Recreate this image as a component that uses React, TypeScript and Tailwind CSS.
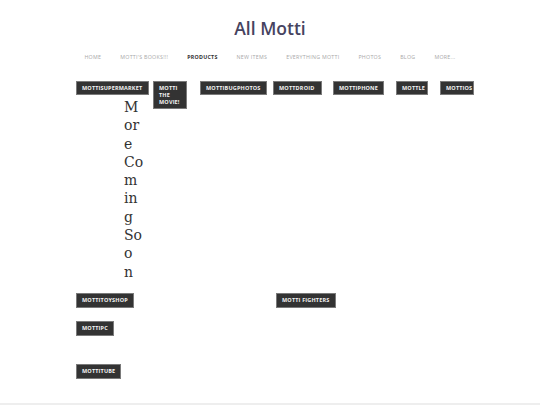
import React from "react";

const Btn = ({ children, w, h = 15, className = "" }: { children: React.ReactNode; w: number; h?: number; className?: string }) => (
  <div
    className={`shrink-0 overflow-hidden whitespace-nowrap border border-[#7a7a7a] bg-[#333333] pl-[5px] pt-[3px] text-[5.5px] font-bold leading-[7px] tracking-[0.03em] text-[#f4f4f4] ${className}`}
    style={{ width: w, height: h, fontFamily: '"Open Sans", sans-serif' }}
  >
    {children}
  </div>
);

export default function App() {
  const nav = ["HOME", "MOTTI'S BOOKS!!!", "PRODUCTS", "NEW ITEMS", "EVERYTHING MOTTI", "PHOTOS", "BLOG", "MORE..."];
  const lines = ["M", "or", "e", "Co", "m", "in", "g", "So", "o", "n"];
  return (
    <div className="relative h-[405px] w-[540px] overflow-hidden bg-white" style={{ fontFamily: '"Open Sans", sans-serif' }}>
      <div className="pt-[19px] text-center text-[17.5px] font-semibold leading-[18px] text-[#46435f]">All Motti</div>
      <nav className="mt-[16px] flex justify-center gap-[19px] text-[5.3px] leading-[8px] tracking-[0.05em] text-[#a8a8a8]">
        {nav.map((n) => (
          <span key={n} className={n === "PRODUCTS" ? "font-bold text-[#333333]" : ""}>
            {n}
          </span>
        ))}
      </nav>
      <div className="pl-[76px] pt-[20px]">
        <div className="flex h-[14px] items-start">
          <Btn w={73} h={14}>MOTTISUPERMARKET</Btn>
          <Btn w={34} h={28} className="ml-[4px] whitespace-normal">
            MOTTI
            <br />
            THE
            <br />
            MOVIE!
          </Btn>
          <Btn w={67} h={14} className="ml-[13px]">MOTTIBUGPHOTOS</Btn>
          <Btn w={49} h={14} className="ml-[6px]">MOTTDROID</Btn>
          <Btn w={51} h={14} className="ml-[11px]">MOTTIPHONE</Btn>
          <Btn w={32} h={14} className="ml-[12px]">MOTTLE</Btn>
          <Btn w={34} h={14} className="ml-[12px]">MOTTIOS</Btn>
        </div>
        <div
          className="ml-[48px] mt-[3px] text-[14px] leading-[18.3px] text-[#333333]"
          style={{ fontFamily: '"DejaVu Serif", serif' }}
        >
          {lines.map((l, i) => (
            <div key={i}>{l}</div>
          ))}
        </div>
        <div className="mt-[12px] flex items-start">
          <Btn w={58}>MOTTITOYSHOP</Btn>
          <Btn w={60} className="ml-[142px]">MOTTI FIGHTERS</Btn>
        </div>
        <div className="mt-[13px] flex">
          <Btn w={38}>MOTTIPC</Btn>
        </div>
        <div className="mt-[28px] flex">
          <Btn w={45}>MOTTITUBE</Btn>
        </div>
      </div>
      <div className="absolute bottom-0 left-0 h-[2px] w-full bg-[#eeeeee]" />
    </div>
  );
}
